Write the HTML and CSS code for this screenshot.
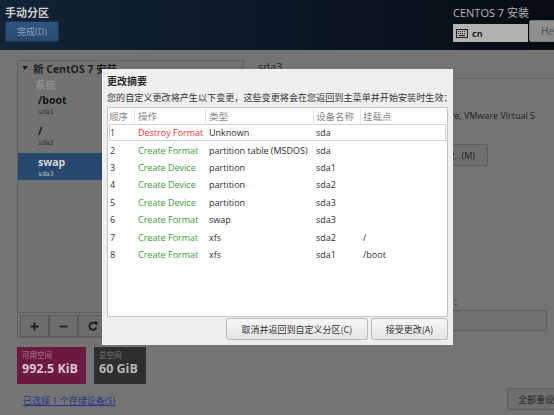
FILE: index.html
```html
<!DOCTYPE html>
<html lang="zh-CN">
<head>
<meta charset="utf-8">
<title>手动分区</title>
<link rel="stylesheet" href="styles.css">
</head>
<body>
<header class="topbar">
  <div class="top-left">
    <div class="page-title">手动分区</div>
    <button class="done-btn">完成(D)</button>
  </div>
  <div class="top-right">
    <div class="product">CENTOS 7 安装</div>
    <div class="top-ctrls">
      <div class="kbd">
        <svg class="kbd-icon" width="12" height="9" viewBox="0 0 12 9"><rect x="0.5" y="0.5" width="11" height="8" fill="none" stroke="#222" stroke-width="1"/><g fill="#222"><rect x="2" y="2" width="1" height="1"/><rect x="4" y="2" width="1" height="1"/><rect x="6" y="2" width="1" height="1"/><rect x="8" y="2" width="1" height="1"/><rect x="2" y="4" width="1" height="1"/><rect x="4" y="4" width="1" height="1"/><rect x="6" y="4" width="1" height="1"/><rect x="8" y="4" width="1" height="1"/><rect x="3" y="6" width="6" height="1"/></g></svg>
        <span class="kbd-text">cn</span>
      </div>
      <button class="help-btn">Help!</button>
    </div>
  </div>
</header>

<main class="content">
  <section class="left">
    <div class="tree-panel">
      <div class="tree">
        <div class="tree-head">
          <svg class="arrow" width="6" height="4" viewBox="0 0 6 4"><path d="M0 0H6L3 4Z" fill="#1e1e1e"/></svg>
          <span>新 CentOS 7 安装</span>
        </div>
        <div class="group-label">系统</div>
        <div class="part">
          <div class="part-name">/boot</div>
          <div class="part-dev">sda1</div>
        </div>
        <div class="part">
          <div class="part-name">/</div>
          <div class="part-dev">sda2</div>
        </div>
        <div class="part selected">
          <div class="part-name">swap</div>
          <div class="part-dev">sda3</div>
        </div>
      </div>
      <div class="toolbar">
        <button class="tool-btn">
          <svg width="9" height="9" viewBox="0 0 9 9"><path d="M4.5 0.5V8.5M0.5 4.5H8.5" stroke="#1a1a1a" stroke-width="1.8"/></svg>
        </button>
        <button class="tool-btn">
          <svg width="9" height="9" viewBox="0 0 9 9"><path d="M0.5 4.5H8.5" stroke="#1a1a1a" stroke-width="1.8"/></svg>
        </button>
        <button class="tool-btn">
          <svg width="10" height="10" viewBox="0 0 10 10"><path d="M8 3.2A3.6 3.6 0 1 0 8.4 6.4" fill="none" stroke="#1a1a1a" stroke-width="1.8"/><path d="M6 0.6L9.6 0.8L9.2 4.4Z" fill="#1a1a1a"/></svg>
        </button>
      </div>
    </div>
    <div class="spaces">
      <div class="space-box avail">
        <div class="space-label">可用空间</div>
        <div class="space-value">992.5 KiB</div>
      </div>
      <div class="space-box total">
        <div class="space-label">总空间</div>
        <div class="space-value">60 GiB</div>
      </div>
    </div>
    <a class="storage-link" href="#">已选择 1 个存储设备(S)</a>
  </section>

  <section class="right">
    <div class="r-title">sda3</div>
    <div class="r-device">VMware, VMware Virtual S</div>
    <button class="r-modify">修改...(M)</button>
    <div class="r-name">
      <div class="r-name-label">名称(N)：</div>
      <div class="r-input"></div>
    </div>
    <button class="r-reset">全部重设(R)</button>
  </section>
</main>

<div class="dialog">
  <div class="dlg-title">更改摘要</div>
  <div class="dlg-sub">您的自定义更改将产生以下变更，这些变更将会在您返回到主菜单并开始安装时生效：</div>
  <div class="table">
    <div class="row head">
      <div class="c c1">顺序</div>
      <div class="c c2">操作</div>
      <div class="c c3">类型</div>
      <div class="c c4">设备名称</div>
      <div class="c c5">挂载点</div>
    </div>
    <div class="row sel">
      <div class="c c1">1</div><div class="c c2 red">Destroy Format</div><div class="c c3">Unknown</div><div class="c c4">sda</div><div class="c c5"></div>
    </div>
    <div class="row">
      <div class="c c1">2</div><div class="c c2 green">Create Format</div><div class="c c3">partition table (MSDOS)</div><div class="c c4">sda</div><div class="c c5"></div>
    </div>
    <div class="row">
      <div class="c c1">3</div><div class="c c2 green">Create Device</div><div class="c c3">partition</div><div class="c c4">sda1</div><div class="c c5"></div>
    </div>
    <div class="row">
      <div class="c c1">4</div><div class="c c2 green">Create Device</div><div class="c c3">partition</div><div class="c c4">sda2</div><div class="c c5"></div>
    </div>
    <div class="row">
      <div class="c c1">5</div><div class="c c2 green">Create Device</div><div class="c c3">partition</div><div class="c c4">sda3</div><div class="c c5"></div>
    </div>
    <div class="row">
      <div class="c c1">6</div><div class="c c2 green">Create Format</div><div class="c c3">swap</div><div class="c c4">sda3</div><div class="c c5"></div>
    </div>
    <div class="row">
      <div class="c c1">7</div><div class="c c2 green">Create Format</div><div class="c c3">xfs</div><div class="c c4">sda2</div><div class="c c5">/</div>
    </div>
    <div class="row">
      <div class="c c1">8</div><div class="c c2 green">Create Format</div><div class="c c3">xfs</div><div class="c c4">sda1</div><div class="c c5">/boot</div>
    </div>
  </div>
  <div class="dlg-buttons">
    <button class="dlg-btn cancel">取消并返回到自定义分区(C)</button>
    <button class="dlg-btn accept">接受更改(A)</button>
  </div>
</div>
</body>
</html>
```

FILE: styles.css
```css
* { box-sizing: border-box; }
html, body {
  margin: 0;
  padding: 0;
  width: 554px;
  height: 415px;
  overflow: hidden;
}
body {
  background: #747474;
  font-family: "Open Sans", "Noto Sans CJK SC", sans-serif;
  font-size: 9px;
  color: #1e1e1e;
  position: relative;
}
button {
  font-family: "Open Sans", "Noto Sans CJK SC", sans-serif;
  padding: 0;
  margin: 0;
}

/* ---------- top bar ---------- */
.topbar {
  height: 50px;
  display: flex;
  justify-content: space-between;
  background: linear-gradient(90deg, #112335 0%, #0c1927 45%, #070c13 100%);
}
.top-left {
  padding: 4px 0 0 5px;
  display: flex;
  flex-direction: column;
  align-items: flex-start;
}
.page-title {
  font-family: "Noto Sans CJK SC", sans-serif;
  font-weight: bold;
  font-size: 11px;
  line-height: 16px;
  color: #cfcfcf;
}
.done-btn {
  margin-top: 1px;
  width: 54px;
  height: 21px;
  border: 1px solid #1b3350;
  border-radius: 2px;
  background: linear-gradient(#2f5681, #27496f);
  color: #8ea4bf;
  font-size: 9px;
}
.top-right {
  width: 101px;
  flex: none;
  display: flex;
  flex-direction: column;
}
.product {
  margin-top: 6px;
  line-height: 14px;
  font-size: 11px;
  color: #b4b4b4;
  white-space: nowrap;
}
.top-ctrls {
  display: flex;
  align-items: flex-end;
  height: 22px;
}
.kbd {
  flex: none;
  width: 75px;
  height: 18px;
  background: #b2b2b2;
  display: flex;
  align-items: center;
  padding-left: 3px;
  gap: 4px;
}
.kbd-text {
  font-weight: bold;
  font-size: 9px;
  color: #1e1e1e;
}
.help-btn {
  flex: none;
  width: 44px;
  height: 22px;
  margin-left: 1px;
  background: #8f8f8f;
  border: 1px solid #7a7a7a;
  border-radius: 2px;
  color: #4a4a4a;
  font-size: 10px;
  text-align: left;
  padding-left: 11px;
}

/* ---------- content ---------- */
.content {
  display: flex;
  height: 365px;
}
.left {
  margin-left: 17px;
  padding-top: 10px;
  width: 227px;
  flex: none;
  display: flex;
  flex-direction: column;
}
.tree-panel {
  height: 278px;
  border: 1px solid #5e5e5e;
  background: #727272;
  display: flex;
  flex-direction: column;
}
.tree { flex: 1; }
.tree-head {
  height: 14px;
  display: flex;
  align-items: center;
  padding-left: 4px;
  gap: 5px;
  font-weight: bold;
  font-size: 10.5px;
  color: #1e1e1e;
  white-space: nowrap;
}
.group-label {
  padding: 4px 0 0 17px;
  line-height: 12px;
  height: 16px;
  font-size: 10.5px;
  color: #9a9a9a;
}
.part {
  height: 27px;
  padding: 2px 0 0 20px;
  margin-bottom: 4px;
}
.part-name {
  line-height: 14px;
  font-weight: bold;
  font-size: 10.5px;
  color: #141414;
}
.part-dev {
  line-height: 10px;
  font-family: "DejaVu Sans Mono", monospace;
  font-size: 6.5px;
  color: #2a2a2a;
}
.part.selected { background: #27476d; }
.part.selected .part-name { color: #d6d6d6; }
.part.selected .part-dev { color: #b9c3ce; }

.toolbar {
  height: 25px;
  border-top: 1px solid #5e5e5e;
  padding: 2px 0 0 2px;
  display: flex;
}
.tool-btn {
  width: 29px;
  height: 22px;
  background: #6e6e6e;
  border: 1px solid #5a5a5a;
  display: flex;
  align-items: center;
  justify-content: center;
}

.spaces {
  margin-top: 9px;
  display: flex;
  gap: 8px;
}
.space-box {
  height: 37px;
  padding: 3px 0 0 5px;
}
.space-box.avail { width: 69px; background: #6b1a40; }
.space-box.total { width: 52px; background: #2e2e2e; }
.space-label {
  font-family: "Noto Sans CJK SC", sans-serif;
  font-size: 7.5px;
  line-height: 10px;
}
.avail .space-label { color: #b27f94; }
.total .space-label { color: #7c7c7c; }
.space-value {
  font-weight: bold;
  font-size: 12.5px;
  line-height: 18px;
  white-space: nowrap;
}
.avail .space-value { color: #dcc4ce; }
.total .space-value { color: #b6b6b6; }

.storage-link {
  margin-top: 11px;
  margin-left: 6px;
  line-height: 12px;
  font-size: 9px;
  color: #25358a;
  text-decoration: underline;
  white-space: nowrap;
}

/* ---------- right pane ---------- */
.right {
  flex: 1;
  padding-top: 10px;
  display: flex;
  flex-direction: column;
}
.r-title {
  padding: 0 0 4px 14px;
  line-height: 14px;
  font-size: 11px;
  color: #1e1e1e;
  border-bottom: 1px solid #666;
}
.r-device {
  margin-top: 31px;
  line-height: 12px;
  text-align: right;
  padding-right: 19px;
  white-space: nowrap;
}
.r-modify {
  align-self: flex-end;
  margin: 22px 66px 0 0;
  width: 90px;
  height: 22px;
  background: #6f6f6f;
  border: 1px solid #5c5c5c;
  border-radius: 2px;
  color: #222;
  font-size: 9px;
  text-align: right;
  padding-right: 12px;
}
.r-name {
  align-self: flex-end;
  margin: 130px 7px 0 0;
  width: 127px;
}
.r-name-label {
  line-height: 12px;
  padding-left: 3px;
  font-family: "Noto Sans CJK SC", sans-serif;
  font-size: 9px;
}
.r-input {
  margin-top: 2px;
  height: 21px;
  background: #727272;
  border: 1px solid #5e5e5e;
  border-radius: 2px;
}
.r-reset {
  align-self: flex-end;
  margin: 57px -14px 0 0;
  width: 61px;
  height: 22px;
  background: #6f6f6f;
  border: 1px solid #5c5c5c;
  border-radius: 2px;
  color: #222;
  font-size: 9px;
  text-align: left;
  padding-left: 10px;
  white-space: nowrap;
}

/* ---------- dialog (modal over content) ---------- */
.dialog {
  position: absolute;
  left: 102px;
  top: 69px;
  width: 351px;
  height: 276px;
  background: #efefef;
  padding: 5px;
  display: flex;
  flex-direction: column;
}
.dlg-title {
  line-height: 14px;
  font-family: "Noto Sans CJK SC", sans-serif;
  font-weight: bold;
  font-size: 10px;
  color: #2a2a2a;
}
.dlg-sub {
  margin-top: 2px;
  line-height: 14px;
  font-family: "Noto Sans CJK SC", sans-serif;
  font-size: 9.1px;
  color: #333;
  white-space: nowrap;
}
.table {
  margin-top: 3px;
  height: 210px;
  background: #fff;
  border: 1px solid #c2c2c2;
}
.row {
  display: grid;
  grid-template-columns: 25px 71px 108px 47px 1fr;
  margin: 0 1px;
  height: 17.4px;
  border: 1px solid transparent;
  align-items: center;
  color: #2e2e2e;
  white-space: nowrap;
}
.row.head {
  height: 16px;
  border: 0;
  margin: 0 1px;
  color: #8a8a8a;
  font-family: "Noto Sans CJK SC", sans-serif;
  font-size: 9.5px;
}
.row.head .c { height: 14px; line-height: 14px; }
.row.head .c2, .row.head .c3, .row.head .c4, .row.head .c5 { border-left: 1px solid #e2e2e2; }
.row.sel { border: 1px solid #d2d2d2; }
.c { overflow: hidden; }
.c2, .c3 { padding-left: 3px; }
.c4, .c5 { padding-left: 2px; }
.red { color: #ea2f38; }
.green { color: #3a9a33; }

.dlg-buttons {
  margin-top: 1px;
  display: flex;
  justify-content: flex-end;
  gap: 3px;
}
.dlg-btn {
  height: 22px;
  border: 1px solid #b9b9b9;
  border-radius: 3px;
  background: linear-gradient(#f7f7f7, #e4e4e4);
  font-family: "Noto Sans CJK SC", sans-serif;
  font-size: 9px;
  color: #333;
}
.dlg-btn.cancel { width: 142px; }
.dlg-btn.accept { width: 77px; }
```
